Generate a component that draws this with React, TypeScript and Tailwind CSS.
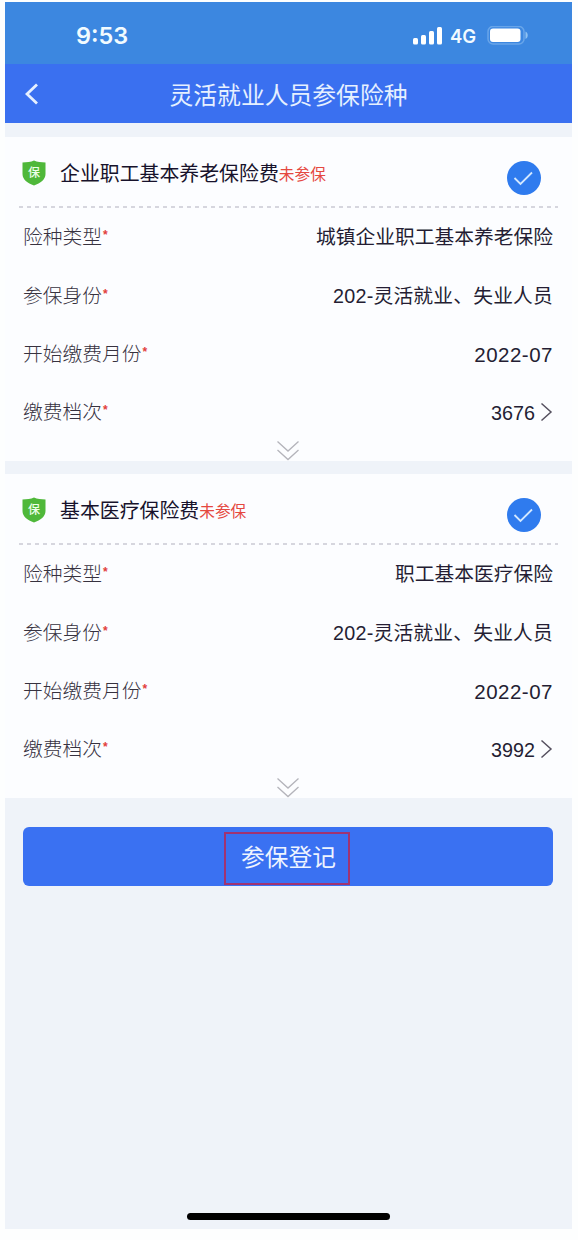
import type { ReactNode } from "react";

type Insurance = {
  title: string;
  status: string;
  type: string;
  identity: string;
  startMonth: string;
  level: string;
};

const insurances: Insurance[] = [
  {
    title: "企业职工基本养老保险费",
    status: "未参保",
    type: "城镇企业职工基本养老保险",
    identity: "202-灵活就业、失业人员",
    startMonth: "2022-07",
    level: "3676",
  },
  {
    title: "基本医疗保险费",
    status: "未参保",
    type: "职工基本医疗保险",
    identity: "202-灵活就业、失业人员",
    startMonth: "2022-07",
    level: "3992",
  },
];

export default function App() {
  return (
    <div className="h-[1240px] w-[578px] bg-[#fdfefe] pt-[2px] pl-[5px] font-['Liberation_Sans','Noto_Sans_CJK_SC',sans-serif]">
      <div className="flex h-[1227px] w-[567px] flex-col bg-[#eff3f9]">
        <StatusBar />
        <NavBar title="灵活就业人员参保险种" />
        <main className="flex flex-col gap-[13px] pt-[14px]">
          {insurances.map((item) => (
            <InsuranceCard key={item.title} item={item} />
          ))}
        </main>
        <div className="pt-[29px] pr-[19px] pl-[18px]">
          <button
            type="button"
            className="flex h-[59px] w-full items-center justify-center rounded-md bg-[#3a71f2] pt-[3px] pr-[3px] text-[23.7px] text-[#eef4ff]"
          >
            <span className="flex h-[53px] w-[126px] items-center justify-center border-2 border-[#a03372] pt-0.5 pl-1">
              参保登记
            </span>
          </button>
        </div>
        <div className="mx-auto mt-auto mb-[9px] h-[7px] w-[203px] rounded-full bg-black" />
      </div>
    </div>
  );
}

function StatusBar() {
  return (
    <div className="flex h-[62px] shrink-0 items-center bg-[#3c87e0] pt-1.5 pr-[43px] pl-[71px] font-['Inter',sans-serif] font-semibold text-[#f2fbff]">
      <span className="text-[23.5px] leading-none">9:53</span>
      <svg className="ml-auto" width="31" height="20" viewBox="0 0 31 20" fill="white">
        <rect x="1" y="12" width="5" height="6.5" rx="1.5" />
        <rect x="9" y="9" width="5" height="9.5" rx="1.5" />
        <rect x="17" y="5" width="5" height="13.5" rx="1.5" />
        <rect x="25" y="1" width="5" height="17.5" rx="1.5" />
      </svg>
      <span className="ml-[7px] w-[28px] text-[18.5px] leading-none">4G</span>
      <svg className="ml-[9px]" width="42" height="20" viewBox="0 0 42 20">
        <rect x="1" y="0.5" width="36" height="17.5" rx="5" fill="none" stroke="#68a5e9" strokeWidth="1.5" />
        <rect x="3" y="2.5" width="30.5" height="13.5" rx="3" fill="white" />
        <path d="M38.5 5.5c3 1.5 3 6 0 7.5z" fill="#8fc2f2" />
      </svg>
    </div>
  );
}

function NavBar({ title }: { title: string }) {
  return (
    <header className="grid h-[59px] shrink-0 grid-cols-[40px_1fr_40px] items-center bg-[#3a70f0] text-[#e6f0ff]">
      <button type="button" aria-label="返回" className="pl-5">
        <svg width="14" height="22" viewBox="0 0 14 22" fill="none" stroke="currentColor" strokeWidth="2.8">
          <path d="M12 1.5 2 11l10 9.5" />
        </svg>
      </button>
      <h1 className="pt-1 text-center text-[23.8px] leading-none">{title}</h1>
    </header>
  );
}

function InsuranceCard({ item }: { item: Insurance }) {
  return (
    <section className="h-[324px] bg-[#fcfdff]">
      <div className="flex h-[69px] items-center pr-[31px] pl-[17px]">
        <ShieldIcon />
        <h2 className="ml-[14px] pt-[6px] text-[19.9px] leading-none text-[#17122b]">{item.title}</h2>
        <span className="pt-[7px] text-[15.7px] leading-none text-[#e5483f]">{item.status}</span>
        <CheckBadge />
      </div>
      <div className="mx-[14px] h-[1.5px] bg-[repeating-linear-gradient(90deg,#d6d6de_0_4px,transparent_4px_8px)]" />
      <dl>
        <Row label="险种类型">{item.type}</Row>
        <Row label="参保身份">
          <span className="tracking-[0.2px]">{item.identity}</span>
        </Row>
        <Row label="开始缴费月份">
          <span className="text-[20.5px] tracking-[0.5px]">{item.startMonth}</span>
        </Row>
        <Row label="缴费档次">
          <span className="pt-px">{item.level}</span>
          <svg className="mb-0.5 ml-[5px]" width="13" height="20" viewBox="0 0 13 20" fill="none" stroke="#55505f" strokeWidth="1.5">
            <path d="M1.5 1.5 11 10l-9.5 8.5" />
          </svg>
        </Row>
      </dl>
      <div className="flex justify-center pr-0.5">
        <svg width="22" height="20" viewBox="0 0 22 20" fill="none" stroke="#b4b4bb" strokeWidth="1.3">
          <path d="m0.5 0.5 10.5 9.5L21.5 0.5M0.5 9 11 18.5 21.5 9" />
        </svg>
      </div>
    </section>
  );
}

function Row({ label, children }: { label: string; children: ReactNode }) {
  return (
    <div className="flex h-[58.4px] items-center justify-between pr-[19px] pl-[18px] text-[19.75px] leading-none">
      <dt className="flex pt-[3px] font-light text-[#37323f]">
        {label}
        <span className="pt-px pl-px text-[12px] font-bold text-[#e2403c]">*</span>
      </dt>
      <dd className="flex items-center pt-[3px] text-[#241d33]">{children}</dd>
    </div>
  );
}

function ShieldIcon() {
  return (
    <span className="relative mt-[3px] flex h-[26px] w-6 items-center justify-center">
      <svg className="absolute inset-0" width="24" height="26" viewBox="0 0 24 26" fill="#4fb83a">
        <path d="M12 0.5C9 2 4.5 2 0.5 2.500V14c0 5.5 5 9 11.5 11.5C18.500 23 23.5 19.5 23.5 14V2.500C19.5 2 15 2 12 0.5Z" />
      </svg>
      <span className="relative text-[12px] leading-none font-medium text-[#edffe8]">保</span>
    </span>
  );
}

function CheckBadge() {
  return (
    <svg className="mt-[13px] ml-auto" width="34" height="34" viewBox="0 0 34 34" fill="none">
      <circle cx="17" cy="17" r="17" fill="#2f7bee" />
      <path d="m7.5 17 6 6L25 11.5" stroke="#d3e8ff" strokeWidth="1.8" />
    </svg>
  );
}
